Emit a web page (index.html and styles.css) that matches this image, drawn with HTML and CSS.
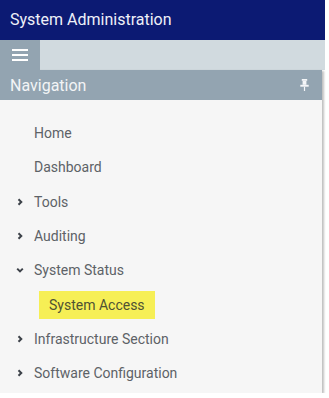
FILE: index.html
```html
<!DOCTYPE html>
<html lang="en">
<head>
    <meta charset="UTF-8">
    <meta name="viewport" content="width=device-width, initial-scale=1.0">
    <title>System Administration</title>
    <link rel="stylesheet" href="styles.css">
</head>
<body>

    <div class="topbar">System Administration</div>

    <div class="toolbar">
        <button class="menu-btn" aria-label="Menu">
            <span></span><span></span><span></span>
        </button>
    </div>

    <div class="nav-panel">
        <div class="nav-header">
            <span>Navigation</span>
            <svg class="pin" width="9" height="12" viewBox="0 0 9 12">
                <rect x="1.8" y="0" width="5.4" height="1.8" fill="#f4f6f8"/>
                <rect x="2.6" y="1.8" width="3.8" height="4" fill="#f4f6f8"/>
                <rect x="0.3" y="5.8" width="8.4" height="1.9" fill="#f4f6f8"/>
                <rect x="3.9" y="7.7" width="1.2" height="4.3" fill="#f4f6f8"/>
            </svg>
        </div>
        <ul class="nav-list">
            <li class="item"><span class="chev"></span>Home</li>
            <li class="item"><span class="chev"></span>Dashboard</li>
            <li class="item"><span class="chev"><svg width="8" height="8" viewBox="0 0 8 8"><path d="M2.5 1.2 L5.3 4 L2.5 6.8" fill="none" stroke="#3d4249" stroke-width="2"/></svg></span>Tools</li>
            <li class="item"><span class="chev"><svg width="8" height="8" viewBox="0 0 8 8"><path d="M2.5 1.2 L5.3 4 L2.5 6.8" fill="none" stroke="#3d4249" stroke-width="2"/></svg></span>Auditing</li>
            <li class="item"><span class="chev"><svg width="8" height="8" viewBox="0 0 8 8"><path d="M1.2 2.6 L4 5.4 L6.8 2.6" fill="none" stroke="#3d4249" stroke-width="2"/></svg></span>System Status</li>
            <li class="item sub"><span class="active">System Access</span></li>
            <li class="item"><span class="chev"><svg width="8" height="8" viewBox="0 0 8 8"><path d="M2.5 1.2 L5.3 4 L2.5 6.8" fill="none" stroke="#3d4249" stroke-width="2"/></svg></span>Infrastructure Section</li>
            <li class="item"><span class="chev"><svg width="8" height="8" viewBox="0 0 8 8"><path d="M2.5 1.2 L5.3 4 L2.5 6.8" fill="none" stroke="#3d4249" stroke-width="2"/></svg></span>Software Configuration</li>
        </ul>
    </div>

</body>
</html>
```

FILE: styles.css
```css
body {
    font-family: Roboto, "Liberation Sans", sans-serif;
    background-color: #ffffff;
    margin: 0;
    padding: 0;
}
.topbar {
    width: 315px;
    height: 40px;
    line-height: 40px;
    padding-left: 10px;
    background-color: #0c1a73;
    color: #eef0f8;
    font-size: 16px;
}
.toolbar {
    width: 325px;
    height: 30px;
    background-color: #d1dadf;
    display: flex;
}
.menu-btn {
    width: 40px;
    height: 30px;
    background-color: #93a4b1;
    border: none;
    padding: 0;
    display: flex;
    flex-direction: column;
    align-items: center;
    justify-content: center;
    gap: 2.5px;
    cursor: pointer;
}
.menu-btn span {
    display: block;
    width: 16px;
    height: 2.5px;
    background-color: #ffffff;
}
.nav-panel {
    width: 322px;
    height: 323px;
    background-color: #f6f6f6;
    box-shadow: 2px 1px 2px rgba(0,0,0,0.25);
}
.nav-header {
    height: 30px;
    background-color: #93a4b1;
    color: #f2f4f6;
    font-size: 16px;
    padding: 0 13px 0 10px;
    display: flex;
    justify-content: space-between;
    align-items: center;
}
.nav-list {
    list-style: none;
    margin: 0;
    padding: 16px 0 0 0;
}
.item {
    height: 34.3px;
    display: flex;
    align-items: center;
    padding-left: 16px;
    font-size: 14px;
    color: #5d6267;
}
.chev {
    width: 8px;
    height: 8px;
    margin-right: 10px;
    display: flex;
}
.item.sub {
    padding-left: 39px;
}
.active {
    background-color: #f6ef55;
    color: #4f5233;
    padding: 0 10px;
    height: 28px;
    line-height: 28px;
}
```
